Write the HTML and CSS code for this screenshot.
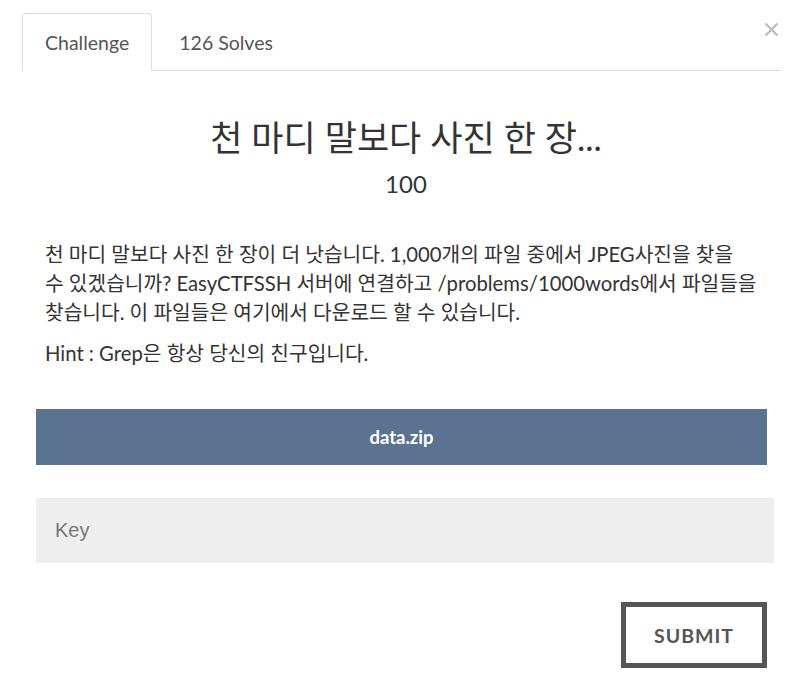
FILE: index.html
```html
<!DOCTYPE html>
<html lang="ko">
<head>
<meta charset="utf-8">
<title>Challenge</title>
<link rel="stylesheet" href="styles.css">
</head>
<body>
<div class="modal">
  <div class="tabs">
    <div class="tab active">Challenge</div>
    <div class="tab">126 Solves</div>
    <button class="close" aria-label="Close">
      <svg width="15" height="15" viewBox="0 0 15 15"><path d="M1.5 1.5 L13.5 13.5 M13.5 1.5 L1.5 13.5" stroke="#bdbdbd" stroke-width="2.4" fill="none"/></svg>
    </button>
  </div>
  <div class="content">
    <h1 class="title">천 마디 말보다 사진 한 장...</h1>
    <div class="value">100</div>
    <p class="desc">천 마디 말보다 사진 한 장이 더 낫습니다. 1,000개의 파일 중에서 JPEG사진을 찾을<br>수 있겠습니까? EasyCTFSSH 서버에 연결하고 /problems/1000words에서 파일들을<br>찾습니다. 이 파일들은 여기에서 다운로드 할 수 있습니다.</p>
    <p class="hint">Hint : Grep은 항상 당신의 친구입니다.</p>
    <a class="file" href="#">data.zip</a>
    <input class="key" type="text" placeholder="Key">
    <div class="actions">
      <button class="submit">SUBMIT</button>
    </div>
  </div>
</div>
</body>
</html>
```
FILE: styles.css
```css
html, body {
  margin: 0;
  padding: 0;
  background: #fff;
}
body {
  font-family: Lato, "Noto Sans CJK KR", sans-serif;
  color: #333;
}
.modal {
  padding: 13px 20px 0 22px;
  display: flex;
  flex-direction: column;
}
.tabs {
  display: flex;
  align-items: stretch;
  border-bottom: 1px solid #ddd;
  position: relative;
  height: 57px;
}
.tab {
  display: flex;
  align-items: center;
  padding: 0 22px;
  font-size: 19.5px;
  color: #555;
  border: 1px solid transparent;
  border-radius: 4px 4px 0 0;
  margin-bottom: -1px;
}
.tab.active {
  border-color: #ddd;
  border-bottom-color: #fff;
  background: #fff;
}
.tab + .tab {
  padding-left: 26px;
}
.close {
  position: absolute;
  right: 2px;
  top: 9px;
  border: none;
  background: none;
  padding: 0;
  width: 15px;
  height: 15px;
  line-height: 0;
}
.content {
  padding: 0 5px 0 14px;
  display: flex;
  flex-direction: column;
}
.title {
  margin: 45px 0 0;
  text-align: center;
  font-weight: 400;
  font-size: 35px;
  line-height: 42px;
  color: #333;
}
.value {
  text-align: center;
  font-size: 24px;
  line-height: 30px;
  margin-top: 11px;
  color: #333;
}
.desc {
  margin: 41px 0 0;
  padding-left: 9px;
  padding-right: 0;
  font-size: 20.3px;
  line-height: 29px;
  color: #333;
  word-break: keep-all;
}
.hint {
  margin: 12px 0 0;
  padding-left: 9px;
  font-size: 20.3px;
  line-height: 29px;
}
.file {
  margin-top: 41px;
  width: 731px;
  height: 56px;
  background: #5b7290;
  color: #fff;
  font-weight: 700;
  font-size: 18.5px;
  text-decoration: none;
  display: flex;
  align-items: center;
  justify-content: center;
}
.key {
  margin-top: 33px;
  width: 738px;
  height: 65px;
  box-sizing: border-box;
  border: none;
  background: #eee;
  padding: 0 19px;
  font-family: "Liberation Sans", Arial, sans-serif;
  font-size: 20px;
  color: #333;
  outline: none;
}
.key::placeholder {
  color: #777;
}
.actions {
  display: flex;
  justify-content: flex-end;
  width: 731px;
  margin-top: 39px;
}
.submit {
  width: 146px;
  height: 66px;
  box-sizing: border-box;
  border: 5px solid #555;
  background: #fff;
  color: #555;
  font-family: Lato, sans-serif;
  font-weight: 700;
  font-size: 19.5px;
  letter-spacing: 1px;
  padding: 0;
}
```
